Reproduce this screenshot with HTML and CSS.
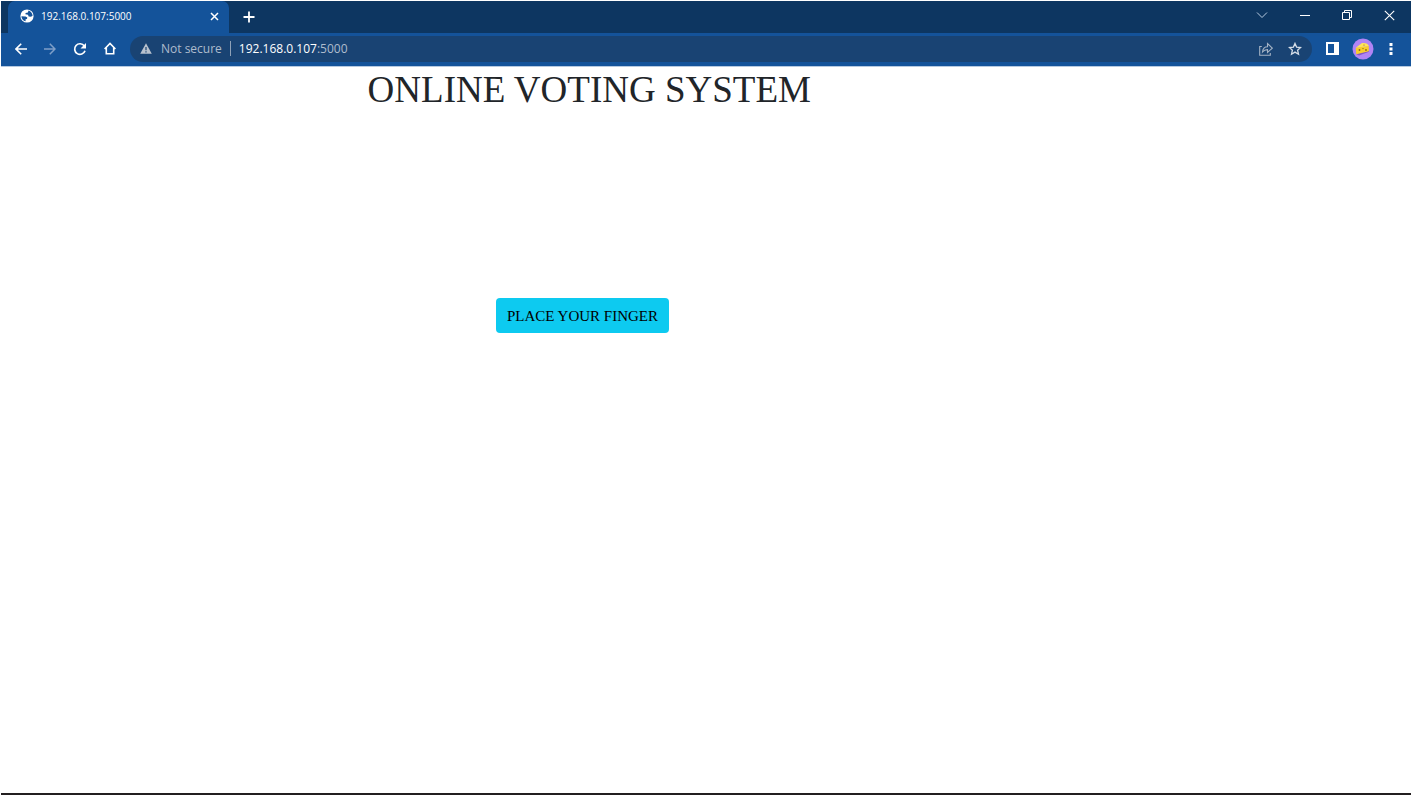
FILE: index.html
```
<!DOCTYPE html>
<html lang="en">
<head>
<meta charset="utf-8">
<title>Online Voting System</title>
<link rel="stylesheet" href="styles.css">
</head>
<body>
<div class="window">
  <header class="tabstrip">
    <div class="tab">
      <svg class="globe" width="14" height="14" viewBox="0 0 14 14"><circle cx="7" cy="7" r="6.600" fill="#fff"/><path d="M1.400 7.200 5.600 7.400 7.300 8.600 7 10 5.600 10.300 5.600 12.300C3.200 11.800 1.400 9.700 1.400 7.200zM8.500 1.600C10.700 2.200 12.500 4.300 12.600 6.700L11 7.800 8.600 7.500 8 5.800 5.400 5.300 5.600 4 7.900 3.400z" fill="#14539a"/></svg>
      <span class="tab-title">192.168.0.107:5000</span>
      <button class="icon" aria-label="Close tab"><svg width="9" height="9" viewBox="0 0 9 9"><path d="M1 1l7 7M8 1 1 8" stroke="#fff" stroke-width="1.500"/></svg></button>
    </div>
    <button class="icon new-tab" aria-label="New tab"><svg width="12" height="12" viewBox="0 0 12 12"><path d="M6 .5v11M.5 6h11" stroke="#fff" stroke-width="1.800"/></svg></button>
    <div class="controls">
      <button class="icon" aria-label="Search tabs"><svg width="12" height="12" viewBox="0 0 12 12"><path d="M1 3.500l5 5 5-5" fill="none" stroke="#b8cbe0"/></svg></button>
      <button class="icon" aria-label="Minimize"><svg width="10" height="12" viewBox="0 0 10 12"><path d="M0 6.500h10" stroke="#fff"/></svg></button>
      <button class="icon" aria-label="Restore"><svg width="10" height="10" viewBox="0 0 10 10"><path d="M.5 2.500h7v7h-7zM2.500 2.500v-2h7v7h-2" fill="none" stroke="#fff"/></svg></button>
      <button class="icon" aria-label="Close window"><svg width="11" height="11" viewBox="0 0 11 11"><path d="M.8.8l9.400 9.400M10.200.8.8 10.200" stroke="#fff" stroke-width="1.100"/></svg></button>
    </div>
  </header>
  <nav class="toolbar">
    <div class="nav-buttons">
      <button class="icon" aria-label="Back"><svg width="12" height="12" viewBox="0 0 12 12"><path d="M12 6H1.200M6.200.8 1 6l5.200 5.200" fill="none" stroke="#fff" stroke-width="1.600"/></svg></button>
      <button class="icon" aria-label="Forward"><svg width="12" height="12" viewBox="0 0 12 12"><path d="M0 6h10.800M5.800.8 11 6l-5.200 5.200" fill="none" stroke="#7f9fc8" stroke-width="1.500"/></svg></button>
      <button class="icon" aria-label="Reload"><svg width="14" height="14" viewBox="0 0 14 14"><path d="M11.300 4A5.300 5.300 0 1 0 12 8.700" fill="none" stroke="#fff" stroke-width="1.700"/><path d="M13 1v5.500H7.500z" fill="#fff"/></svg></button>
      <button class="icon" aria-label="Home"><svg width="12" height="13" viewBox="0 0 12 13"><path d="M.6 7 6 1.400 11.400 7M2.300 5.600v6.200h7.400V5.600" fill="none" stroke="#fff" stroke-width="1.600"/></svg></button>
    </div>
    <div class="address">
      <svg width="12" height="11" viewBox="0 0 12 11"><path d="M6 .3 11.800 10.700H.2z" fill="#b9c2ce"/><path d="M6 4v3.200M6 8.200v1.300" stroke="#194373" stroke-width="1.200"/></svg>
      <span class="security">Not secure</span>
      <span class="divider"></span>
      <span class="url"><b>192.168.0.107</b>:5000</span>
      <button class="icon share" aria-label="Share"><svg width="14" height="14" viewBox="0 0 14 14"><path d="M2.800 4.500H.7v8.800h10.600v-2.300M3.500 10c.3-3.400 2.100-5.200 5-5.200V1.600l4.800 4.500-4.800 4.400V7.600C6.300 7.600 4.800 8.300 3.500 10z" fill="none" stroke="#a5b3c5" stroke-width="1.100"/></svg></button>
      <button class="icon" aria-label="Bookmark"><svg width="14" height="14" viewBox="0 0 14 14"><path d="M7 1.400l1.600 3.700 4 .4-3 2.700.9 4L7 10.100l-3.500 2.100.9-4-3-2.700 4-.4z" fill="none" stroke="#d5dde7" stroke-width="1.300"/></svg></button>
    </div>
    <div class="tools">
      <button class="icon" aria-label="Side panel"><svg width="13" height="13" viewBox="0 0 13 13"><path d="M0 0h13v13H0zM2 2v9h6V2z" fill="#fff" fill-rule="evenodd"/></svg></button>
      <button class="icon" aria-label="Profile"><svg width="22" height="22" viewBox="0 0 22 22"><circle cx="11" cy="11" r="10.500" fill="#b184f5"/><path d="M4 16l13-3.500v1.300L7 17.500z" fill="#8157c5"/><path d="M3.800 9.800 16.800 8v5.200L4.200 16.300z" fill="#f9cf2b"/><path d="M3.800 9.800 10 5q5.600-.6 6.800 3z" fill="#ffe45a"/><g fill="#8d6418"><circle cx="7.500" cy="12" r=".9"/><circle cx="11" cy="10.600" r=".7"/><circle cx="14" cy="12" r=".9"/><circle cx="12" cy="7" r=".6"/></g></svg></button>
      <button class="icon" aria-label="Menu"><svg width="4" height="12" viewBox="0 0 4 12"><path d="M.5 0h3v3h-3zM.5 4.500h3v3h-3zM.5 9h3v3h-3z" fill="#fff"/></svg></button>
    </div>
  </nav>
  <main class="page">
    <h1 class="heading">ONLINE VOTING SYSTEM</h1>
    <button class="finger">PLACE YOUR FINGER</button>
  </main>
</div>
</body>
</html>
```
FILE: styles.css
```
* { box-sizing: border-box; }
body { margin: 0; background: #fff; font-family: "Open Sans", "Segoe UI", sans-serif; }
button { font: inherit; cursor: pointer; }
svg { display: block; }
.window { display: flex; flex-direction: column; min-height: 100vh; padding: 1px; }
.icon { display: flex; flex: none; padding: 0; border: 0; background: none; }
.tabstrip { display: flex; align-items: center; height: 32px; padding-left: 7px; background: #0d3661; }
.tab { display: flex; align-items: center; align-self: stretch; width: 221px; padding: 0 10px 2px 12px; border-radius: 7px 7px 0 0; background: #14539a; color: #fff; }
.tab-title { flex: 1; margin-left: 7px; font-size: 10px; line-height: 14px; }
.new-tab { margin-left: 14px; }
.controls { display: flex; align-items: center; gap: 32px; margin-left: auto; padding: 0 16px 4px 0; }
.toolbar { display: flex; align-items: center; height: 34px; padding: 0 18px 2px 14px; border-bottom: 1px solid #b5c9e0; background: #14539a; }
.nav-buttons { display: flex; align-items: center; gap: 17px; width: 115px; }
.address { display: flex; flex: 1; align-items: center; height: 26px; padding: 0 10px; border-radius: 13px; background: #194373; color: #aebccd; font-size: 12px; line-height: 18px; }
.security { margin-left: 9px; }
.divider { width: 1px; height: 15px; margin: 0 8px; background: #8fa1b7; }
.url b { color: #fff; font-weight: 400; }
.share { margin-left: auto; margin-right: 15px; }
.tools { display: flex; align-items: center; gap: 13px; padding-left: 14px; }
.tools .icon:last-child { margin-left: 2px; }
.page { flex: 1; border-bottom: 2px solid #231f20; background: #fff; font-family: "Liberation Serif", "Times New Roman", serif; }
.heading { margin: 0 0 186px; padding-left: 26%; color: #212529; font-size: 37px; font-weight: 400; line-height: 45px; }
.finger { display: block; margin-left: 35.1%; padding: 9px 11px 7px; border: 0; border-radius: 4px; background: #0dcaf0; color: #000; font-size: 15px; line-height: 19px; }
```
